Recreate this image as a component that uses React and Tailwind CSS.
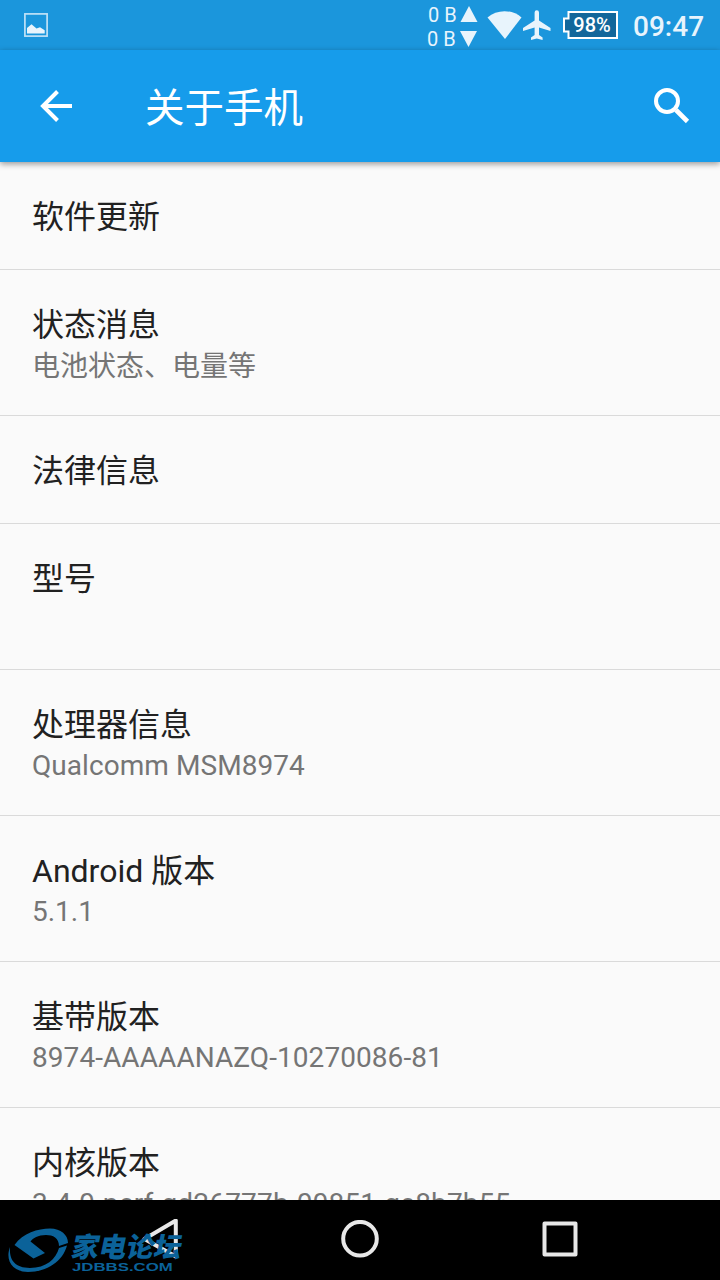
const items = [
  { title: "软件更新" },
  { title: "状态消息", summary: "电池状态、电量等", summaryClass: "top-[2px]" },
  { title: "法律信息" },
  { title: "型号", summary: "\u00a0" },
  { title: "处理器信息", summary: "Qualcomm MSM8974", summaryClass: "top-px tracking-[0.06px]" },
  { title: "Android 版本", summary: "5.1.1", summaryClass: "top-px" },
  { title: "基带版本", summary: "8974-AAAAANAZQ-10270086-81", summaryClass: "top-px tracking-[0.07px]" },
  { title: "内核版本", summary: "3.4.0-perf-gd26777b-00851-ge8b7b55", summaryClass: "top-px tracking-[0.18px]" },
];

const StatusBar = () => (
  <div className="flex h-[50px] shrink-0 items-center bg-[#1b96dc] pl-6 text-[#e8f4fc]">
    <svg width="24" height="24" viewBox="0 0 24 24" className="shrink-0">
      <rect x="0.9" y="0.9" width="22.2" height="22.2" fill="none" stroke="currentColor" strokeOpacity="0.8" strokeWidth="1.7" />
      <path d="M3 20.5V15l4.500-3.700 5 4.200 3.500-1.300 4.700 3v3.300z" fill="currentColor" />
    </svg>

    {/* Network speed */}
    <div className="ml-[379px] w-[31px] shrink-0 whitespace-nowrap pt-1 text-xl leading-6">
      <div className="pl-[1px]">0 B</div>
      <div>0 B</div>
    </div>
    <svg width="20" height="50" viewBox="0 0 20 50" className="shrink-0" fill="currentColor">
      <path d="M11 6l8.500 16h-17zM2 31h17l-8.500 16z" />
    </svg>

    {/* Wi-Fi, airplane mode */}
    <svg width="36" height="50" viewBox="0 0 36 50" className="ml-[9px] shrink-0" fill="currentColor">
      <path d="M0.500 17.500C10 9 25 9 34.500 17.500L18 39z" />
    </svg>
    <svg width="30" height="50" viewBox="0 0 30 50" className="-ml-[1px] shrink-0" fill="currentColor">
      <path d="M28.500 31v-3L17 20.500V12.500a2.200 2.200 0 0 0-4.400 0v8L1 28v3l11.600-3.500v7.500l-3.600 2.500v2.500l5.800-1.500 5.800 1.500v-2.500L17 35v-7.500z" />
    </svg>

    {/* Battery */}
    <div className="relative ml-[11px] h-7 w-[55px] shrink-0">
      <svg width="55" height="28" viewBox="0 0 55 28">
        <path d="M5.500 1H54v26H5.500v-6.500H1v-13h4.500z" fill="#12679b" stroke="#fff" strokeWidth="2" />
      </svg>
      <span className="absolute inset-0 pl-[3px] text-center text-[20px] font-medium leading-[28px] text-white">98%</span>
    </div>

    <span className="ml-[15px] pt-[3px] text-[28px] font-medium leading-[50px]">09:47</span>
  </div>
);

const Toolbar = () => (
  <header className="relative flex h-28 shrink-0 items-center bg-[#169ceb] pl-10 text-white shadow-[0_2px_6px_rgba(0,0,0,0.4)]">
    <svg width="32" height="32" viewBox="0 0 32 32" fill="none" stroke="currentColor" strokeWidth="4">
      <path d="M32 16H3M17.500 1.500L3 16l14.500 14.500" />
    </svg>
    <h1 className="ml-[73px] pt-[5px] text-[39.500px] leading-[56px]">关于手机</h1>
    <svg width="36" height="36" viewBox="0 0 36 36" className="ml-auto mr-[30px]" fill="none" stroke="currentColor">
      <circle cx="13" cy="13" r="11" strokeWidth="4" />
      <path d="M22 22l11.500 11.500" strokeWidth="4.600" />
    </svg>
  </header>
);

const Watermark = () => (
  <div className="absolute left-2 top-7 flex text-[#0b6299]">
    <svg width="62" height="46" viewBox="0 0 62 46" fill="currentColor">
      <path d="M6.500 17C15 5 30 0.500 42 0.500 53 0.500 60 7 60 15l-9 3C51 10 45 7 38 7 30 7 25 10 22.500 13.500L37 25l-11.500 5.500z" />
      <path d="M59 17.500C55 33 39 44 20 44 4 44-3 32 2 19 1 31 6 40 22 40c16 0 26-9 29-20z" />
    </svg>
    <div className="ml-[2px] pt-[5px]">
      <div className="-skew-x-12 whitespace-nowrap text-[27.500px] font-black leading-[29px]">家电论坛</div>
      <div className="origin-left scale-x-[1.600] whitespace-nowrap font-['Liberation_Sans',sans-serif] text-[10.500px] font-bold leading-[10px]">JDBBS.COM</div>
    </div>
  </div>
);

const NavBar = () => (
  <nav className="relative flex h-20 shrink-0 items-center bg-black pl-[140px] text-[#e8e8e8]">
    <svg width="40" height="42" viewBox="0 0 40 42" fill="none" stroke="currentColor" strokeWidth="4" strokeLinejoin="round">
      <path d="M35.800 1.500v36L4.500 20z" />
    </svg>
    <svg width="40" height="40" viewBox="0 0 40 40" className="ml-[160px]" fill="none" stroke="currentColor" strokeWidth="4">
      <circle cx="20" cy="18.700" r="16.800" />
    </svg>
    <svg width="40" height="40" viewBox="0 0 40 40" className="ml-[160px]" fill="none" stroke="currentColor" strokeWidth="4" strokeLinejoin="round">
      <rect x="4.500" y="3.500" width="31" height="31" />
    </svg>
    <Watermark />
  </nav>
);

const App = () => {
  return (
    <div className="flex h-[1280px] w-[720px] flex-col overflow-hidden bg-[#fafafa] font-[Roboto,'Noto_Sans_CJK_SC',sans-serif]">
      <StatusBar />
      <Toolbar />

      <main className="min-h-0 flex-1 overflow-hidden">
        {items.map((item) => (
          <div key={item.title} className="border-b border-[#dadada] px-8 pb-[30px] pt-[33px]">
            <div className="text-[32px] leading-[44px] text-[#212121]">{item.title}</div>
            {item.summary && (
              <div className={`relative -mt-px mb-px text-[28px] leading-[38px] text-[#757575] ${item.summaryClass || ""}`}>
                {item.summary}
              </div>
            )}
          </div>
        ))}
      </main>

      <NavBar />
    </div>
  );
};

export default App;
